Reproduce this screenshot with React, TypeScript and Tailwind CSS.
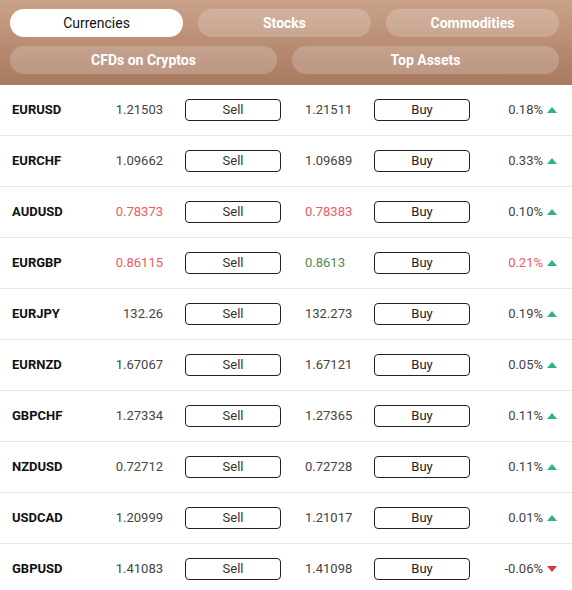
import React from "react";

type Row = {
  sym: string;
  bid: string;
  ask: string;
  pct: string;
  bidTone?: "red" | "green";
  askTone?: "red" | "green";
  pctTone?: "red";
  down?: boolean;
};

const rows: Row[] = [
  { sym: "EURUSD", bid: "1.21503", ask: "1.21511", pct: "0.18%" },
  { sym: "EURCHF", bid: "1.09662", ask: "1.09689", pct: "0.33%" },
  { sym: "AUDUSD", bid: "0.78373", ask: "0.78383", pct: "0.10%", bidTone: "red", askTone: "red" },
  { sym: "EURGBP", bid: "0.86115", ask: "0.8613", pct: "0.21%", bidTone: "red", askTone: "green", pctTone: "red" },
  { sym: "EURJPY", bid: "132.26", ask: "132.273", pct: "0.19%" },
  { sym: "EURNZD", bid: "1.67067", ask: "1.67121", pct: "0.05%" },
  { sym: "GBPCHF", bid: "1.27334", ask: "1.27365", pct: "0.11%" },
  { sym: "NZDUSD", bid: "0.72712", ask: "0.72728", pct: "0.11%" },
  { sym: "USDCAD", bid: "1.20999", ask: "1.21017", pct: "0.01%" },
  { sym: "GBPUSD", bid: "1.41083", ask: "1.41098", pct: "-0.06%", down: true },
];

const tone = (t?: "red" | "green") =>
  t === "red" ? "text-[#ef5a60]" : t === "green" ? "text-[#4f8a4f]" : "text-[#444]";

function Tab({ label, active }: { label: string; active?: boolean }) {
  return (
    <div
      className={
        "h-[28px] flex-1 rounded-full flex items-center justify-center text-[14px] leading-none pb-[1px] " +
        (active
          ? "bg-white text-[#111] font-normal"
          : "bg-white/20 text-white font-bold")
      }
    >
      {label}
    </div>
  );
}

export default function App() {
  return (
    <div className="w-[572px] h-[590px] overflow-hidden bg-white font-['Roboto',sans-serif]">
      {/* tabs */}
      <div className="h-[85px] bg-gradient-to-b from-[#caa28a] to-[#a8795f] pl-[10px] pr-[13px] pt-[9px] flex flex-col gap-[9px]">
        <div className="flex gap-[15px]">
          <Tab label="Currencies" active />
          <Tab label="Stocks" />
          <Tab label="Commodities" />
        </div>
        <div className="flex gap-[15px]">
          <Tab label="CFDs on Cryptos" />
          <Tab label="Top Assets" />
        </div>
      </div>

      {/* quotes */}
      <div>
        {rows.map((r) => (
          <div
            key={r.sym}
            className="h-[51px] border-b border-[#e6e6e6] flex items-center pl-[12px] pr-[15px] text-[13px]"
          >
            <div className="w-[100px] font-bold text-[#111] text-[13px]">{r.sym}</div>
            <div className={"w-[51px] text-right " + tone(r.bidTone)}>{r.bid}</div>
            <div className="ml-[22px] w-[96px] h-[22px] border border-[#222] rounded-[4px] flex items-center justify-center text-[#333]">
              Sell
            </div>
            <div className={"ml-[24px] w-[69px] " + tone(r.askTone)}>{r.ask}</div>
            <div className="w-[96px] h-[22px] border border-[#222] rounded-[4px] flex items-center justify-center text-[#222]">
              Buy
            </div>
            <div className="flex-1 flex items-center justify-end gap-[4px]">
              <span className={r.pctTone === "red" ? "text-[#ef5a60]" : "text-[#444]"}>{r.pct}</span>
              {r.down ? (
                <svg width="10" height="6" viewBox="0 0 10 6">
                  <path d="M0 0 H10 L5 6 Z" fill="#e0323c" />
                </svg>
              ) : (
                <svg width="10" height="6" viewBox="0 0 10 6">
                  <path d="M0 6 H10 L5 0 Z" fill="#2db38c" />
                </svg>
              )}
            </div>
          </div>
        ))}
      </div>
    </div>
  );
}
